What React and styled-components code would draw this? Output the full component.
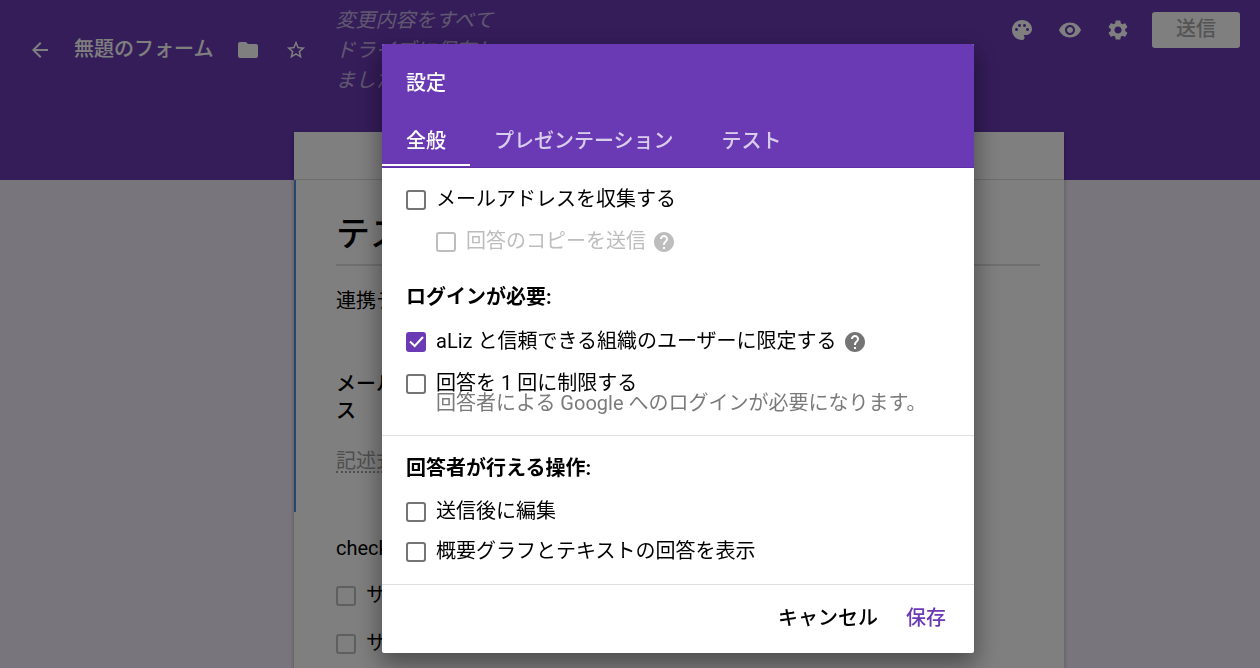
import React from "react";
import styled, { createGlobalStyle } from "styled-components";
import {
  MdArrowBack,
  MdFolder,
  MdHelp,
  MdPalette,
  MdRemoveRedEye,
  MdSettings,
  MdStarBorder,
} from "react-icons/md";

const GlobalStyle = createGlobalStyle`
  * {
    box-sizing: border-box;
  }
  body {
    margin: 0;
    overflow: hidden;
    font-family: Roboto, "Noto Sans CJK JP", sans-serif;
    font-size: 20px;
    line-height: 20px;
    color: #000;
    background-color: #f0ebf8;
  }
  button {
    font: inherit;
    border: none;
    background: none;
    padding: 0;
    cursor: pointer;
  }
  h1, h2, h3, p {
    margin: 0;
    font-size: inherit;
  }
`;

const Page = styled.div`
  height: 100vh;
  overflow: hidden;
`;

const TopBar = styled.header`
  height: 180px;
  display: flex;
  justify-content: space-between;
  align-items: flex-start;
  padding: 0 20px 0 28px;
  color: white;
  background-color: #6a3ab4;
`;

const TopLeft = styled.div`
  display: flex;
  align-items: center;
  padding-top: 5px;
`;

const TopRight = styled.div`
  display: flex;
  align-items: center;
  gap: 22px;
  padding-top: 12px;
`;

const Tools = styled.div`
  display: flex;
  gap: 24px;
`;

const IconButton = styled.button`
  display: flex;
  align-items: center;
  justify-content: center;
  width: 24px;
  height: 24px;
  color: inherit;
  font-size: ${(props) => props.$size || 24}px;
`;

const FormName = styled.h1`
  margin: 0 22px;
  padding: 0 1px 2px 0;
  font-weight: 500;
  line-height: 24px;
`;

const Star = styled.div`
  margin: 0 27px 0 24px;
`;

const SaveStatus = styled.p`
  width: 160px;
  font-style: italic;
  line-height: 30px;
  color: rgba(255, 255, 255, 0.6);
`;

const SendButton = styled.button`
  width: 88px;
  height: 36px;
  padding-bottom: 2px;
  border-radius: 3px;
  font-weight: 500;
  color: #a8a8a8;
  background-color: white;
`;

const FormArea = styled.main`
  display: flex;
  justify-content: center;
  margin-top: -48px;
  padding-left: 98px;
`;

const FormCard = styled.div`
  width: 770px;
  background-color: white;
  box-shadow: 0 2px 4px rgba(0, 0, 0, 0.3);
`;

const FormTabs = styled.div`
  height: 48px;
  border-bottom: 1px solid #dadada;
`;

const Question = styled.section`
  height: 332px;
  padding: 28px 24px 0 40px;
  border-left: 2px solid #4a90e2;
`;

const FormTitle = styled.h2`
  height: 58px;
  font-size: 34px;
  font-weight: 500;
  line-height: 52px;
  border-bottom: 2px solid #dedede;
`;

const FormText = styled.p`
  margin-top: 23px;
  line-height: 24px;
`;

const QuestionTitle = styled.h3`
  width: 136px;
  margin-top: 58px;
  font-weight: 500;
  line-height: 27px;
`;

const ShortAnswer = styled.span`
  display: inline-block;
  margin-top: 26px;
  line-height: 20px;
  color: #9e9e9e;
  border-bottom: 2px dotted #9e9e9e;
`;

const Choices = styled.section`
  height: 200px;
  padding: 26px 24px 0 42px;
`;

const ChoicesTitle = styled.h3`
  font-weight: 400;
`;

const Choice = styled.div`
  display: flex;
  align-items: center;
  height: 20px;
  margin-top: 28px;
`;

const Checkbox = styled.input.attrs({ type: "checkbox" })`
  appearance: none;
  flex: none;
  width: 20px;
  height: 20px;
  margin: 0;
  border: 2px solid #757575;
  border-radius: 3px;

  &:disabled {
    border-color: #bdbdbd;
  }

  &:checked {
    border-color: #6a3ab4;
    background: #6a3ab4
      url("data:image/svg+xml,%3Csvg xmlns='http://www.w3.org/2000/svg' viewBox='0 0 16 16'%3E%3Cpath d='M2 7.5 6.7 12 15 3' fill='none' stroke='white' stroke-width='2'/%3E%3C/svg%3E")
      center / 16px no-repeat;
  }
`;

const Backdrop = styled.div`
  position: fixed;
  inset: 0;
  display: flex;
  justify-content: center;
  align-items: flex-start;
  padding: 44px 0 0 96px;
  background-color: rgba(0, 0, 0, 0.5);
`;

const Dialog = styled.div`
  width: 592px;
  border-radius: 2px;
  background-color: white;
  box-shadow: 0 10px 24px 2px rgba(0, 0, 0, 0.4);
`;

const DialogHeader = styled.div`
  padding: 29px 0 1px;
  border-radius: 2px 2px 0 0;
  border-bottom: 1px solid #5b2fa6;
  color: white;
  background-color: #6a3ab4;
`;

const DialogTitle = styled.h2`
  padding: 0 24px;
  font-weight: 500;
`;

const Tabs = styled.div`
  display: flex;
  margin-top: 25px;
`;

const Tab = styled.button`
  height: 48px;
  padding: 0 24px;
  font-weight: 500;
  color: ${(props) => (props.$active ? "white" : "rgba(255, 255, 255, 0.75)")};
  border-bottom: 2px solid ${(props) => (props.$active ? "white" : "transparent")};
`;

const Section = styled.section`
  padding: 22px 24px;
  border-bottom: 1px solid #dfdfdf;
`;

const SectionTitle = styled.h3`
  margin: ${(props) => (props.$spaced ? "35px 0 25px" : "0 0 24px")};
  font-weight: 700;
`;

const Options = styled.div`
  display: flex;
  flex-direction: column;
  gap: ${(props) => props.$gap || 22}px;
`;

const Row = styled.div`
  display: flex;
  align-items: center;
  height: 20px;
  margin-left: ${(props) => (props.$nested ? 30 : 0)}px;
  color: ${(props) => (props.$disabled ? "#bdbdbd" : "black")};
`;

const OptionLabel = styled.label`
  padding: 0 0 2px 10px;
`;

const Help = styled.button`
  display: flex;
  margin-left: 6px;
  font-size: 24px;
  color: ${(props) => (props.$disabled ? "#bdbdbd" : "#757575")};
`;

const Note = styled.p`
  padding-left: 30px;
  line-height: 19px;
  color: #7a7a7a;
`;

const DialogFooter = styled.div`
  display: flex;
  justify-content: flex-end;
  align-items: center;
  gap: 28px;
  height: 68px;
  padding: 0 28px 2px;
`;

const FooterButton = styled.button`
  font-weight: 500;
  color: ${(props) => (props.$primary ? "#6a3ab4" : "black")};
`;

const Option = ({ id, label, note, nested, disabled, checked, help }) => {
  return (
    <div>
      <Row $nested={nested} $disabled={disabled}>
        <Checkbox id={id} disabled={disabled} defaultChecked={checked} />
        <OptionLabel htmlFor={id}>{label}</OptionLabel>
        {help && (
          <Help $disabled={disabled} aria-label="ヘルプ">
            <MdHelp />
          </Help>
        )}
      </Row>
      {note && <Note>{note}</Note>}
    </div>
  );
};

const SettingsDialog = () => {
  return (
    <Backdrop>
      <Dialog role="dialog" aria-labelledby="settings-title">
        <DialogHeader>
          <DialogTitle id="settings-title">設定</DialogTitle>
          <Tabs role="tablist">
            <Tab role="tab" aria-selected="true" $active>
              全般
            </Tab>
            <Tab role="tab">プレゼンテーション</Tab>
            <Tab role="tab">テスト</Tab>
          </Tabs>
        </DialogHeader>
        <Section>
          <Options>
            <Option id="collect" label="メールアドレスを収集する" />
            <Option id="copy" label="回答のコピーを送信" nested disabled help />
          </Options>
          <SectionTitle $spaced>ログインが必要:</SectionTitle>
          <Options>
            <Option
              id="restrict"
              label="aLiz と信頼できる組織のユーザーに限定する"
              checked
              help
            />
            <Option
              id="once"
              label="回答を 1 回に制限する"
              note="回答者による Google へのログインが必要になります。"
            />
          </Options>
        </Section>
        <Section>
          <SectionTitle>回答者が行える操作:</SectionTitle>
          <Options $gap={20}>
            <Option id="edit" label="送信後に編集" />
            <Option id="summary" label="概要グラフとテキストの回答を表示" />
          </Options>
        </Section>
        <DialogFooter>
          <FooterButton>キャンセル</FooterButton>
          <FooterButton $primary>保存</FooterButton>
        </DialogFooter>
      </Dialog>
    </Backdrop>
  );
};

const App = () => {
  return (
    <>
      <GlobalStyle />
      <Page>
        <TopBar>
          <TopLeft>
            <IconButton aria-label="戻る">
              <MdArrowBack />
            </IconButton>
            <FormName>無題のフォーム</FormName>
            <IconButton aria-label="フォルダに移動">
              <MdFolder />
            </IconButton>
            <Star>
              <IconButton $size={22} aria-label="スター">
                <MdStarBorder />
              </IconButton>
            </Star>
            <SaveStatus>変更内容をすべてドライブに保存しました</SaveStatus>
          </TopLeft>
          <TopRight>
            <Tools>
              <IconButton aria-label="テーマ">
                <MdPalette />
              </IconButton>
              <IconButton aria-label="プレビュー">
                <MdRemoveRedEye />
              </IconButton>
              <IconButton aria-label="設定">
                <MdSettings />
              </IconButton>
            </Tools>
            <SendButton>送信</SendButton>
          </TopRight>
        </TopBar>
        <FormArea>
          <FormCard>
            <FormTabs />
            <Question>
              <FormTitle>テスト</FormTitle>
              <FormText>連携テスト</FormText>
              <QuestionTitle>メールアドレス</QuestionTitle>
              <ShortAnswer>記述式テキスト</ShortAnswer>
            </Question>
            <Choices>
              <ChoicesTitle>checkbox</ChoicesTitle>
              <Choice>
                <Checkbox id="choice1" disabled />
                <OptionLabel htmlFor="choice1">サンプル</OptionLabel>
              </Choice>
              <Choice>
                <Checkbox id="choice2" disabled />
                <OptionLabel htmlFor="choice2">サンプル</OptionLabel>
              </Choice>
            </Choices>
          </FormCard>
        </FormArea>
      </Page>
      <SettingsDialog />
    </>
  );
};

export default App;
